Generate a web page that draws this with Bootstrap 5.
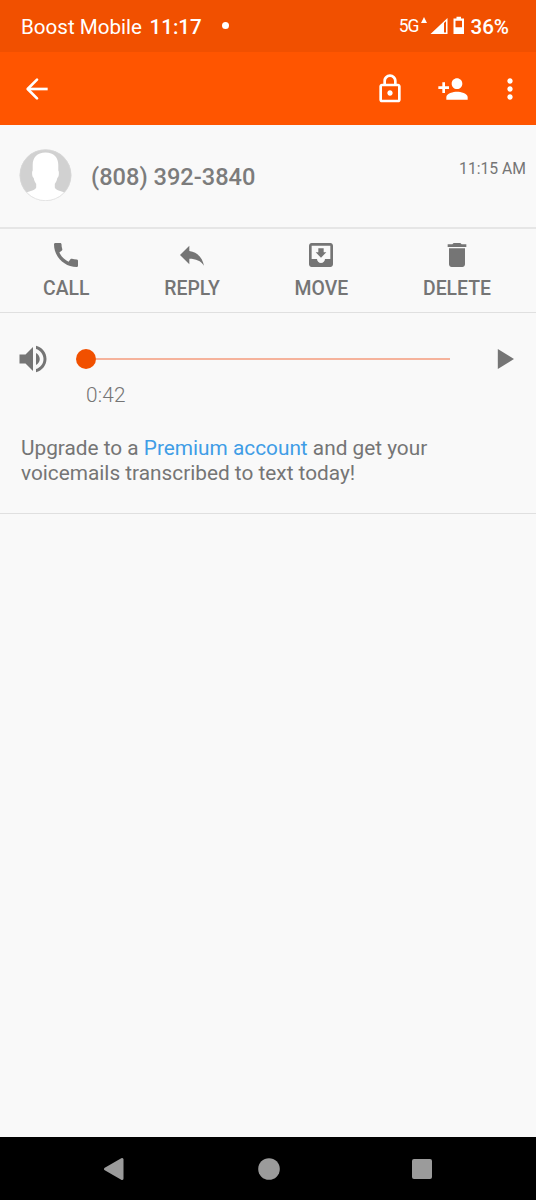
<!DOCTYPE html>
<html lang="en">
<head>
<meta charset="utf-8">
<meta name="viewport" content="width=device-width, initial-scale=1">
<title>Voicemail</title>
<link href="https://cdn.jsdelivr.net/npm/bootstrap@5.3.0/dist/css/bootstrap.min.css" rel="stylesheet">
<style>
body{font-family:Roboto,sans-serif;background:#f9f9f9;color:#757575;height:1200px;overflow:hidden}
svg{display:block;flex:none;fill:currentColor}
.fw-mid{font-weight:500}
.statusbar{height:52px;background:#f15000;font-size:20.6px;line-height:24px;padding:1px 27px 0 21px}
.clock{margin-left:7.500px}
.dot{width:7px;height:7px;margin:-3px 0 0 20px}
.net{font-size:17.500px;letter-spacing:-1px;margin-top:-2px}
.appbar{height:73px;background:#ff5500;padding:0 10px 0 20.500px}
.line-b{border-bottom:2px solid #e6e6e6}
.line-thin{border-bottom:1px solid #e0e0e0}
.contact{height:104px;padding:0 10px 0 19px}
.phone{font-size:23.600px;line-height:28px;margin:2px 0 0 19px;color:#7c7c7c}
.stamp{font-size:15.700px;line-height:18px;margin-top:34.500px}
.actions{height:84px;padding:10px 45px 0 43px;font-size:19.400px;line-height:24px}
.act{gap:6px}
.player{padding:28px 15px 0 15px}
.track{width:374px;height:20px;margin-left:25px}
.knob{width:20px;height:20px;background:#f15000}
.rail{height:2px;background:#f6b39c}
.dur{font-size:20.800px;line-height:24px;letter-spacing:.2px;font-weight:300;padding:6px 0 0 86px}
.promo{font-size:20.800px;line-height:24.500px;padding:29px 0 28px 21px}
.promo a{color:#3f9de6}
.sysnav{height:63px;background:#000;color:#9b9b9b;padding:0 104px 0 103px}
</style>
</head>
<body class="d-flex flex-column">
<header class="text-white">
  <div class="statusbar d-flex align-items-center">
    <span>Boost Mobile</span><span class="clock fw-mid">11:17</span><span class="dot rounded-circle bg-white"></span>
    <span class="net ms-auto">5G</span>
    <svg width="52" height="24" viewBox="0 0 52 24"><path d="M3 8l3-6 3 6zM12.500 19L29.500 3V19zM35.500 3.500h3v-1.800h4.500v1.800h3V19h-10.500z"/><path fill="#f15000" d="M26 8l2-1.800V17.500h-2zM37.500 5.700h6.500v6.500h-6.500z"/></svg>
    <span class="fw-mid">36%</span>
  </div>
  <nav class="appbar d-flex align-items-center">
    <svg width="32" height="32" viewBox="0 0 24 24"><path fill="none" stroke="currentColor" stroke-width="2" stroke-linecap="round" stroke-linejoin="round" d="M12 5l-7 7 7 7"/><path d="M5 11h15v2H5z"/></svg>
    <svg class="ms-auto" width="32" height="32" viewBox="0 0 24 24"><path d="M18 8h-1V6c0-2.760-2.240-5-5-5S7 3.240 7 6v2H6c-1.100 0-2 .9-2 2v10c0 1.100.9 2 2 2h12c1.100 0 2-.9 2-2V10c0-1.100-.9-2-2-2zM9 6c0-1.660 1.340-3 3-3s3 1.340 3 3v2H9V6zm9 14H6V10h12v10zm-6-3c1.100 0 2-.9 2-2s-.9-2-2-2-2 .9-2 2 .9 2 2 2z"/></svg>
    <svg style="margin-left:31px" width="32" height="32" viewBox="0 0 24 24"><path d="M15 12c2.210 0 4-1.790 4-4s-1.790-4-4-4-4 1.790-4 4 1.790 4 4 4zm-9-2V7H4v3H1v2h3v3h2v-3h3v-2H6zm9 4c-2.670 0-8 1.340-8 4v2h16v-2c0-2.660-5.330-4-8-4z"/></svg>
    <svg style="margin-left:25px" width="32" height="32" viewBox="0 0 24 24"><path d="M12 8c1.100 0 2-.9 2-2s-.9-2-2-2-2 .9-2 2 .9 2 2 2zm0 2c-1.100 0-2 .9-2 2s.9 2 2 2 2-.9 2-2-.9-2-2-2zm0 6c-1.100 0-2 .9-2 2s.9 2 2 2 2-.9 2-2-.9-2-2-2z"/></svg>
  </nav>
</header>
<main class="flex-grow-1">
  <section class="contact line-b d-flex align-items-center">
    <svg class="mb-1" width="53" height="53" viewBox="0 0 53 53"><circle cx="26.500" cy="27.200" r="25.800" fill="#d1d1d1"/><path fill="#fff" d="M26.500 4.500C18 4.500 13.700 9.500 13.700 17v5.500c-1 1-.8 6.500 1 7.500.5 3 1.500 4.500 2.500 6v3.500c-1 3-6 3.500-10 5A25.800 25.800 0 0 0 45.800 44.500c-4-1.500-9-2-10-5V36c1-1.500 2-3 2.500-6 1.800-1 2-6.500 1-7.500V17c0-7.500-4.300-12.500-12.800-12.500z"/><circle cx="26.500" cy="27.200" r="25.500" fill="none" stroke="#d8d8d8" stroke-width=".7"/></svg>
    <span class="phone fw-mid">(808) 392-3840</span>
    <span class="stamp ms-auto align-self-start">11:15 AM</span>
  </section>
  <section class="actions line-thin fw-mid d-flex justify-content-between align-items-start">
    <div class="act d-flex flex-column align-items-center"><svg width="32" height="32" viewBox="0 0 24 24"><path d="M20.010 15.380c-1.230 0-2.420-.2-3.530-.56-.35-.12-.74-.03-1.010.24l-1.570 1.970c-2.830-1.350-5.480-3.900-6.890-6.830l1.950-1.660c.27-.28.35-.67.24-1.020-.37-1.110-.56-2.300-.56-3.530 0-.54-.45-.99-.99-.99H4.190C3.650 3 3 3.240 3 3.990 3 13.280 10.730 21 20.010 21c.71 0 .99-.63.99-1.180v-3.450c0-.54-.45-.99-.99-.99z"/></svg><span>CALL</span></div>
    <div class="act d-flex flex-column align-items-center"><svg width="32" height="32" viewBox="0 0 24 24"><path d="M10 9V5l-7 7 7 7v-4.100c5 0 8.500 1.600 11 5.100-1-5-4-10-11-11z"/></svg><span>REPLY</span></div>
    <div class="act d-flex flex-column align-items-center"><svg width="32" height="32" viewBox="0 0 24 24"><path d="M19 3H4.990c-1.110 0-1.980.9-1.980 2L3 19c0 1.100.88 2 1.990 2H19c1.100 0 2-.9 2-2V5c0-1.100-.9-2-2-2zm0 12h-4c0 1.660-1.350 3-3 3s-3-1.340-3-3H4.990V5H19v10zm-3-5h-2V7h-4v3H8l4 4 4-4z"/></svg><span>MOVE</span></div>
    <div class="act d-flex flex-column align-items-center"><svg width="32" height="32" viewBox="0 0 24 24"><path d="M6 19c0 1.100.9 2 2 2h8c1.100 0 2-.9 2-2V7H6v12zM19 4h-3.500l-1-1h-5l-1 1H5v2h14V4z"/></svg><span>DELETE</span></div>
  </section>
  <section class="line-thin">
    <div class="player d-flex align-items-center">
      <svg width="36" height="36" viewBox="0 0 24 24"><path d="M3 9v6h4l5 5V4L7 9H3zm13.500 3c0-1.770-1.020-3.290-2.500-4.030v8.050c1.480-.73 2.500-2.250 2.500-4.020zM14 3.230v2.060c2.890.86 5 3.540 5 6.710s-2.110 5.850-5 6.710v2.060c4.010-.91 7-4.490 7-8.770s-2.990-7.860-7-8.770z"/></svg>
      <div class="track d-flex align-items-center"><span class="knob rounded-circle"></span><span class="rail flex-grow-1"></span></div>
      <svg class="ms-auto" width="24" height="24" viewBox="0 0 24 24"><path d="M.8 2l16.200 10L.8 22z"/></svg>
    </div>
    <div class="dur">0:42</div>
    <div class="promo">Upgrade to a <a href="#" class="text-decoration-none">Premium account</a> and get your<br>voicemails transcribed to text today!</div>
  </section>
</main>
<footer class="sysnav d-flex justify-content-between align-items-center">
  <svg width="22" height="24" viewBox="0 0 22 24"><path stroke="currentColor" stroke-width="3" stroke-linejoin="round" d="M2.500 12L19 2.500v19z"/></svg>
  <svg width="22" height="22" viewBox="0 0 22 22"><circle cx="11" cy="11" r="10.800"/></svg>
  <svg width="20" height="20" viewBox="0 0 20 20"><rect width="20" height="20" rx="2"/></svg>
</footer>
<script src="https://cdn.jsdelivr.net/npm/bootstrap@5.3.0/dist/js/bootstrap.bundle.min.js"></script>
</body>
</html>
